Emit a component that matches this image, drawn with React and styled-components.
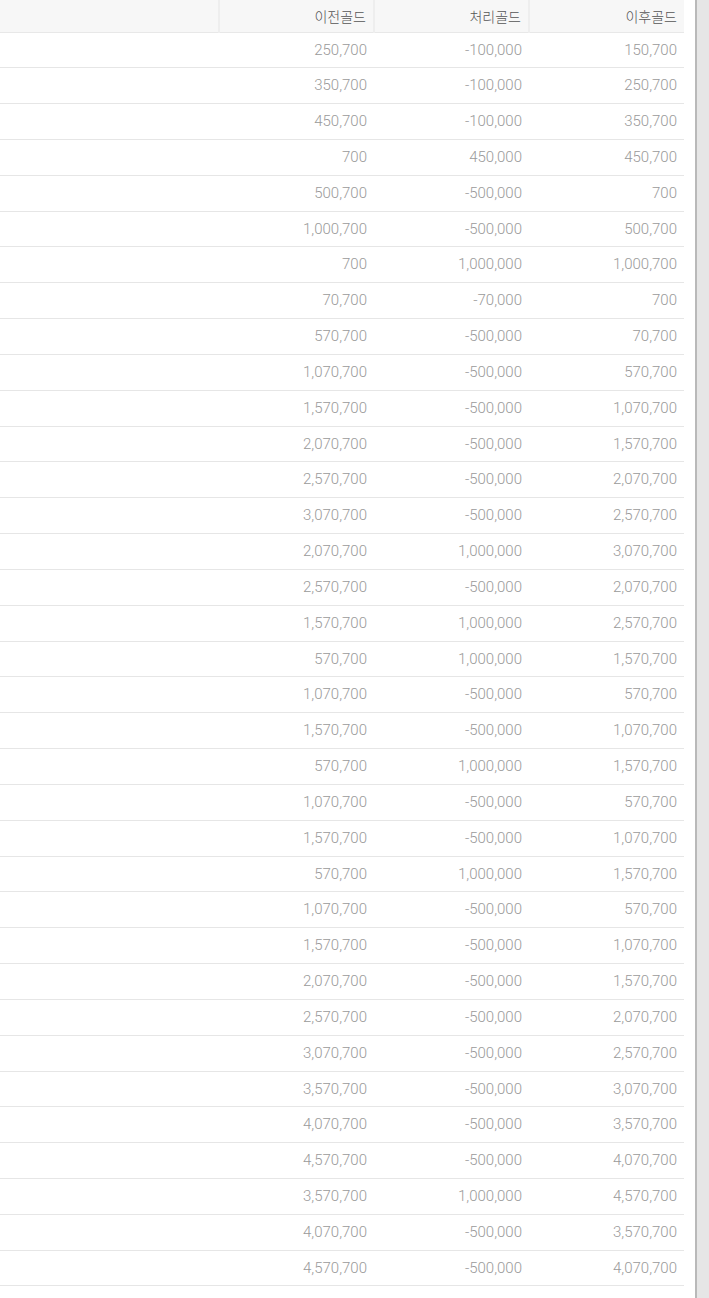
import React from "react";
import styled, { createGlobalStyle } from "styled-components";

const GlobalStyle = createGlobalStyle`
  html, body { margin: 0; padding: 0; background: #e6e6e6; }
  body { font-family: Roboto, "Noto Sans CJK KR", sans-serif; }
`;

const Panel = styled.div`
  width: 697px;
  box-sizing: border-box;
  background: #fff;
  border-right: 2px solid #b9b9b9;
  padding-right: 13px;
  min-height: 1298px;
`;

const Table = styled.table`
  width: 684px;
  border-collapse: collapse;
  table-layout: fixed;
  font-family: Roboto, "Noto Sans CJK KR", sans-serif;
  font-weight: 300;
  font-size: 14px;
`;

const HeadCell = styled.th`
  height: 32px;
  padding: 0 7px 0 8px;
  box-sizing: border-box;
  background: #f7f7f7;
  border-bottom: 1px solid #e8e8e8;
  border-left: ${(p) => (p.$first ? "none" : "2px solid #eeeeee")};
  color: #555;
  font-size: 14px;
  font-weight: 300;
  text-align: right;
  vertical-align: middle;
  font-family: Roboto, "Noto Sans CJK KR", sans-serif;
`;

const Cell = styled.td`
  padding: 8px 7px 8px 8px;
  line-height: 18.83px;
  font-size: 15px;
  border-bottom: 1px solid #e6e6e6;
  color: #9a9a9a;
  text-align: right;
  white-space: nowrap;
`;

const rows = [
  ["250,700", "-100,000", "150,700"],
  ["350,700", "-100,000", "250,700"],
  ["450,700", "-100,000", "350,700"],
  ["700", "450,000", "450,700"],
  ["500,700", "-500,000", "700"],
  ["1,000,700", "-500,000", "500,700"],
  ["700", "1,000,000", "1,000,700"],
  ["70,700", "-70,000", "700"],
  ["570,700", "-500,000", "70,700"],
  ["1,070,700", "-500,000", "570,700"],
  ["1,570,700", "-500,000", "1,070,700"],
  ["2,070,700", "-500,000", "1,570,700"],
  ["2,570,700", "-500,000", "2,070,700"],
  ["3,070,700", "-500,000", "2,570,700"],
  ["2,070,700", "1,000,000", "3,070,700"],
  ["2,570,700", "-500,000", "2,070,700"],
  ["1,570,700", "1,000,000", "2,570,700"],
  ["570,700", "1,000,000", "1,570,700"],
  ["1,070,700", "-500,000", "570,700"],
  ["1,570,700", "-500,000", "1,070,700"],
  ["570,700", "1,000,000", "1,570,700"],
  ["1,070,700", "-500,000", "570,700"],
  ["1,570,700", "-500,000", "1,070,700"],
  ["570,700", "1,000,000", "1,570,700"],
  ["1,070,700", "-500,000", "570,700"],
  ["1,570,700", "-500,000", "1,070,700"],
  ["2,070,700", "-500,000", "1,570,700"],
  ["2,570,700", "-500,000", "2,070,700"],
  ["3,070,700", "-500,000", "2,570,700"],
  ["3,570,700", "-500,000", "3,070,700"],
  ["4,070,700", "-500,000", "3,570,700"],
  ["4,570,700", "-500,000", "4,070,700"],
  ["3,570,700", "1,000,000", "4,570,700"],
  ["4,070,700", "-500,000", "3,570,700"],
  ["4,570,700", "-500,000", "4,070,700"],
];

export default function App() {
  return (
    <>
      <GlobalStyle />
      <Panel>
        <Table>
          <colgroup>
            <col style={{ width: 219 }} />
            <col style={{ width: 155 }} />
            <col style={{ width: 155 }} />
            <col style={{ width: 155 }} />
          </colgroup>
          <thead>
            <tr>
              <HeadCell $first></HeadCell>
              <HeadCell>이전골드</HeadCell>
              <HeadCell>처리골드</HeadCell>
              <HeadCell>이후골드</HeadCell>
            </tr>
          </thead>
          <tbody>
            {rows.map((r, i) => (
              <tr key={i}>
                <Cell></Cell>
                <Cell>{r[0]}</Cell>
                <Cell>{r[1]}</Cell>
                <Cell>{r[2]}</Cell>
              </tr>
            ))}
          </tbody>
        </Table>
      </Panel>
    </>
  );
}
